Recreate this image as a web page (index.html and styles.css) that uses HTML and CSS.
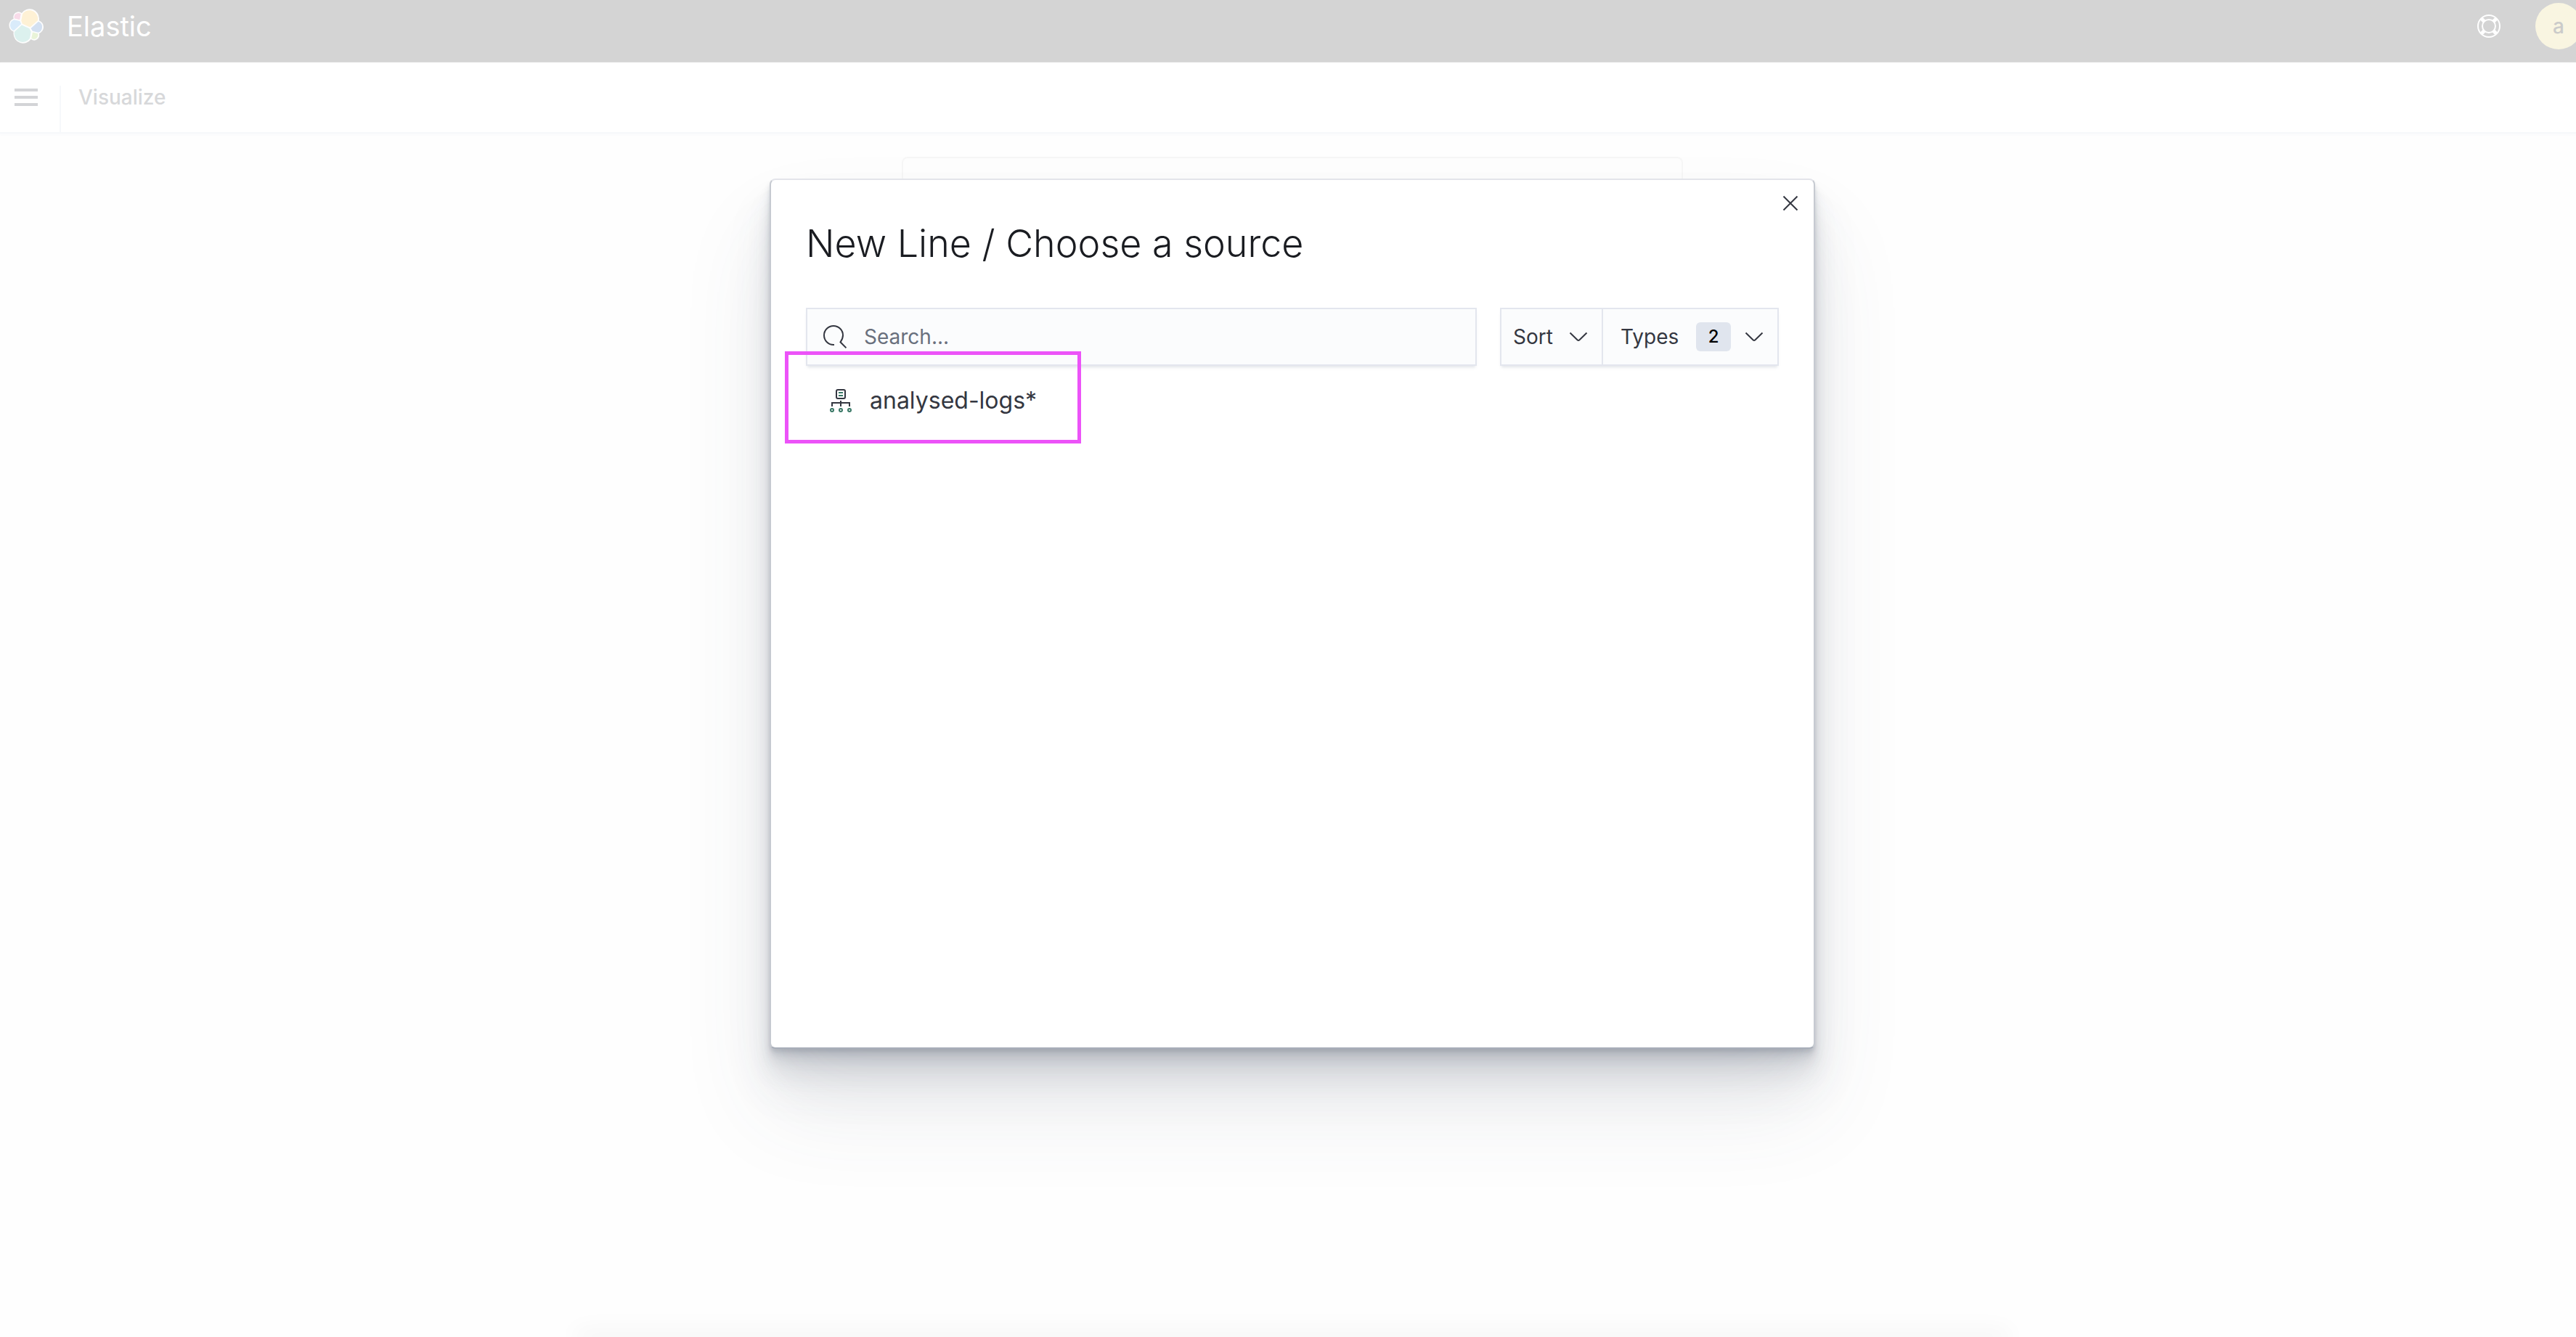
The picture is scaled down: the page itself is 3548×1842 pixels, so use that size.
FILE: index.html
```html
<!DOCTYPE html>
<html lang="en">
<head>
<meta charset="utf-8">
<title>Visualize - Elastic</title>
<link rel="stylesheet" href="styles.css">
</head>
<body>
<div class="app">
  <header class="topbar">
    <a class="brand" href="#">
      <svg class="brand-logo" viewBox="0 0 32 32" aria-hidden="true">
        <path fill="#fdfdfd" d="M32 16.77a6.334 6.334 0 00-1.14-3.63 6.269 6.269 0 00-3.02-2.32 9.02 9.02 0 00.16-1.7 8.952 8.952 0 00-1.71-5.27A8.959 8.959 0 0021.86.56a8.99 8.99 0 00-5.53.06 8.94 8.94 0 00-4.42 3.33 4.807 4.807 0 00-5.81-.05 4.8 4.8 0 00-1.67 2.39 4.76 4.76 0 00.06 2.91A6.37 6.37 0 001.45 11.54 6.345 6.345 0 00.3 15.18a6.3 6.3 0 001.15 3.65 6.3 6.3 0 003.04 2.33 8.77 8.77 0 00-.17 1.7 8.92 8.92 0 001.71 5.25 8.94 8.94 0 0010.01 3.19 8.93 8.93 0 004.41-3.33 4.78 4.78 0 005.8.06 4.77 4.77 0 001.67-2.38 4.75 4.75 0 00-.06-2.9 6.36 6.36 0 003.01-2.34A6.33 6.33 0 0032 16.77z"/>
        <path fill="#fef1d5" d="M12.58 13.787l7.002 3.211 7.066-6.213a7.849 7.849 0 00.152-1.557c0-4.287-3.464-7.775-7.72-7.775a7.713 7.713 0 00-6.368 3.363l-1.176 6.132 1.044 2.839z"/>
        <path fill="#dcf1ee" d="M5.333 21.228a8.01 8.01 0 00-.155 1.583c0 4.3 3.486 7.797 7.77 7.797a7.76 7.76 0 006.39-3.367l1.166-6.102-1.557-2.993-7.03-3.22-6.584 6.302z"/>
        <path fill="#f8dbe9" d="M5.288 9.065l4.8 1.138 1.052-5.485a3.795 3.795 0 00-2.301-.777 3.817 3.817 0 00-3.811 3.824c0 .451.093.9.26 1.3z"/>
        <path fill="#d9ebfa" d="M4.871 10.214A5.378 5.378 0 001.32 15.26c0 2.187 1.347 4.13 3.37 4.902l6.733-6.11-1.236-2.654-5.316-1.184z"/>
        <path fill="#e9f3d8" d="M20.872 27.23a3.795 3.795 0 002.287.776 3.817 3.817 0 003.815-3.824c0-.457-.08-.9-.234-1.315l-4.794-1.126-1.074 5.49z"/>
        <path fill="#d3e0f1" d="M21.849 20.564l5.277 1.241a5.38 5.38 0 003.552-5.049 5.237 5.237 0 00-3.38-4.886l-6.902 6.07 1.453 2.624z"/>
      </svg>
      <span>Elastic</span>
    </a>
    <div class="topbar-actions">
      <button class="icon-button" type="button" aria-label="Help">
        <svg class="icon" viewBox="0 0 32 32" fill="none" stroke="#fff" stroke-width="2" aria-hidden="true">
          <circle cx="16" cy="16" r="15"/><circle cx="16" cy="16" r="9"/>
          <path stroke-width="5" d="M5.6 5.6l4 4M22.400 9.600l4-4M5.600 26.400l4-4M22.400 22.400l4 4"/>
        </svg>
      </button>
      <button class="avatar" type="button" aria-label="Account menu">a</button>
    </div>
  </header>
  <nav class="navbar">
    <button class="menu-button" type="button" aria-label="Toggle navigation">
      <svg class="icon" viewBox="0 0 32 32" fill="#d3d4d7" aria-hidden="true"><path d="M0 4h32v4H0zM0 14h32v4H0zM0 24h32v4H0z"/></svg>
    </button>
    <span class="breadcrumb">Visualize</span>
  </nav>
  <main class="page"><div class="panel"></div></main>
  <footer class="dock"></footer>

  <div class="overlay">
    <section class="modal" role="dialog" aria-labelledby="modal-title">
      <button class="close" type="button" aria-label="Close">
        <svg class="icon" viewBox="0 0 32 32" fill="none" stroke="#343741" stroke-width="2" aria-hidden="true"><path d="M6.500 6.500l19 19M25.500 6.500l-19 19"/></svg>
      </button>
      <h1 class="modal-title" id="modal-title">New Line / Choose a source</h1>
      <div class="toolbar">
        <label class="search">
          <svg class="icon" viewBox="0 0 32 32" fill="none" stroke="#343741" stroke-width="2" aria-hidden="true"><path d="M15 27h-1a13 13 0 1 1 13-13c0 3.800-1.500 6.500-3.500 9.300l8 8"/></svg>
          <input type="search" placeholder="Search..." aria-label="Search">
        </label>
        <div class="filters">
          <button class="filter" type="button">Sort
            <svg class="icon" viewBox="0 0 32 32" fill="none" stroke="#343741" stroke-width="2" aria-hidden="true"><path d="M4.500 10.500l10 9.800q1.500 1.400 3 0l10-9.800"/></svg>
          </button>
          <button class="filter filter-types" type="button">Types
            <span class="badge">2</span>
            <svg class="icon" viewBox="0 0 32 32" fill="none" stroke="#343741" stroke-width="2" aria-hidden="true"><path d="M4.500 10.500l10 9.800q1.500 1.400 3 0l10-9.800"/></svg>
          </button>
        </div>
      </div>
      <ul class="sources">
        <li class="source-item">
          <button class="source" type="button">
            <svg class="icon" viewBox="0 0 32 32" fill="none" stroke-width="2" aria-hidden="true">
              <g stroke="#343741"><rect x="10" y="1" width="12" height="12" rx="2"/><path d="M16 16v8M4 24v-5h24v5"/></g>
              <g stroke="#387765"><path d="M13 5h6M13 9h6"/><circle cx="4" cy="29" r="2"/><circle cx="16" cy="29" r="2"/><circle cx="28" cy="29" r="2"/></g>
            </svg>
            <span>analysed-logs*</span>
          </button>
          <div class="highlight"></div>
        </li>
      </ul>
    </section>
  </div>
</div>
</body>
</html>
```
FILE: styles.css
```css
* { box-sizing: border-box; }

html, body { height: 100%; }

body {
  margin: 0;
  overflow: hidden;
  background: #fefefe;
  color: #343741;
  font-family: Inter, "Liberation Sans", sans-serif;
  font-size: 28px;
  line-height: 40px;
}

button, input {
  margin: 0;
  padding: 0;
  border: 0;
  background: none;
  color: inherit;
  font: inherit;
}

.icon {
  display: block;
  flex: none;
  width: 32px;
  height: 32px;
}

/* The app runs slightly past the right edge of the window. */
.app {
  display: flex;
  flex-direction: column;
  width: calc(100% + 12px);
  min-height: 100%;
}

.topbar {
  display: flex;
  align-items: center;
  justify-content: space-between;
  height: 86px;
  padding: 0 4px 14px 12px;
  background: #d4d4d4;
}

.brand {
  display: flex;
  align-items: center;
  gap: 32px;
  color: #fff;
  font-size: 38px;
  text-decoration: none;
}

.brand-logo { width: 48px; height: 48px; }

.topbar-actions {
  display: flex;
  align-items: center;
  gap: 48px;
}

.avatar {
  width: 64px;
  height: 64px;
  border-radius: 50%;
  background: #f9f5e1;
  color: #cbcbca;
  font-weight: 500;
}

.navbar {
  display: flex;
  height: 98px;
  border-bottom: 2px solid #f6f8fb;
  background: #fff;
  box-shadow: 0 2px 4px #f9fafc;
}

.menu-button {
  display: flex;
  align-items: center;
  padding: 0 30px 0 20px;
}

.breadcrumb {
  align-self: flex-end;
  height: 64px;
  padding: 0 24px;
  border-left: 2px solid #f6f8fb;
  color: #d7d8da;
  font-weight: 500;
  line-height: 32px;
}

.page {
  display: flex;
  flex: 1;
  align-items: flex-start;
  justify-content: center;
  padding-top: 32px;
}

.panel {
  width: 1076px;
  height: 50vh;
  border: 2px solid #f7f7f7;
  border-radius: 8px;
}

.dock {
  align-self: center;
  width: 55%;
  box-shadow: 0 0 32px 8px #f2f2f2;
}

.overlay {
  position: absolute;
  inset: 0 -12px 0 0;
  display: flex;
  align-items: flex-start;
  justify-content: center;
  padding-top: 246px;
}

.modal {
  position: relative;
  width: 1440px;
  min-height: calc(65vh + 2px);
  padding: 48px;
  border: 2px solid;
  border-color: #e3e4ea #c6cad1 #a8aeb9;
  border-radius: 8px;
  background: #fff;
  box-shadow:
    0 80px 128px rgba(65, 78, 101, .1),
    0 48px 64px rgba(65, 78, 101, .1),
    0 32px 32px rgba(65, 78, 101, .1),
    0 16px 16px rgba(65, 78, 101, .1),
    0 8px 8px rgba(65, 78, 101, .1),
    0 4px 4px rgba(65, 78, 101, .1);
}

.close {
  position: absolute;
  top: 16px;
  right: 16px;
}

.modal-title {
  margin: 0 0 48px;
  color: #1a1c21;
  font-size: 52px;
  font-weight: 300;
  line-height: 80px;
}

.toolbar {
  display: flex;
  gap: 32px;
  height: 80px;
}

.search, .filters {
  display: flex;
  border: 2px solid #e3e6ee;
  background: #fbfcfd;
  box-shadow: 0 4px 4px -2px rgba(152, 162, 179, .3);
}

.search {
  flex: 1;
  align-items: center;
  gap: 24px;
  padding-left: 22px;
}

.search input {
  flex: 1;
  outline: 0;
}

.search input::placeholder { color: #69707d; opacity: 1; }

.filters { width: 384px; }

.filter {
  display: flex;
  align-items: center;
  justify-content: space-between;
  flex: 1;
  padding: 0 16px;
}

.filter-types {
  flex: none;
  width: 242px;
  padding-left: 24px;
  border-left: 2px solid #e3e6ee;
}

.badge {
  width: 48px;
  margin-left: 8px;
  border-radius: 6px;
  background: #e0e5ee;
  color: #000;
  font-size: 24px;
  font-weight: 500;
}

.sources {
  margin: 0;
  padding: 24px 32px;
  list-style: none;
}

.source-item {
  position: relative;
  width: fit-content;
}

.source {
  display: flex;
  align-items: center;
  gap: 24px;
  font-size: 32px;
  line-height: 48px;
}

/* Annotation frame around the chosen source. */
.highlight {
  position: absolute;
  inset: -44px -61px -35px;
  border: 5px solid #ec53f8;
  pointer-events: none;
}
```
